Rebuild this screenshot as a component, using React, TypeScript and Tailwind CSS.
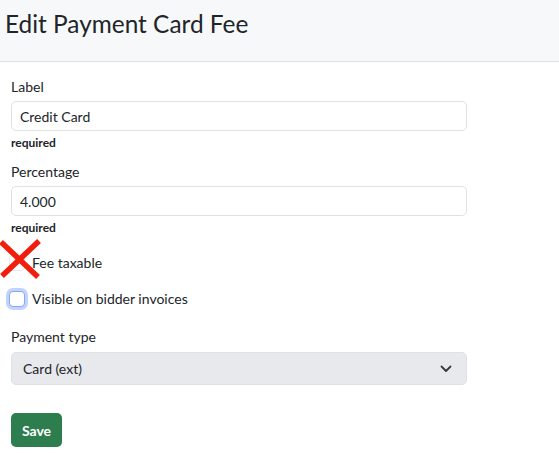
import React from "react";

export default function App() {
  return (
    <div className="w-[559px] h-[453px] bg-white text-[#212529] overflow-hidden" style={{ fontFamily: "Lato, 'Noto Sans', sans-serif" }}>
      <div className="h-[62px] bg-[#f7f8fa] border-b border-[#dee2e6] px-[5px] pt-[9px]">
        <h1 className="text-[24.4px] leading-[30px] font-normal">Edit Payment Card Fee</h1>
      </div>
      <div className="pl-[11px] pr-[92px] pt-[14px]">
        <div className="text-[14px] leading-[21px] mb-[4px]">Label</div>
        <div className="h-[30px] border border-[#dee2e6] rounded-[5px] px-[8px] flex items-center text-[14px]">Credit Card</div>
        <div className="text-[12px] font-bold leading-[18px] mt-[3px]">required</div>
        <div className="text-[14px] leading-[21px] mt-[9px] mb-[4px]">Percentage</div>
        <div className="h-[30px] border border-[#dee2e6] rounded-[5px] px-[8px] flex items-center text-[14px]">4.000</div>
        <div className="text-[12px] font-bold leading-[18px] mt-[3px]">required</div>
        <div className="relative flex items-center h-[21px] mt-[15px] text-[14px]">
          <div className="w-[16px] h-[16px] border border-[#e6e8eb] rounded-[4px] ml-[-2px] mr-[7px] bg-white" />
          <span>Fee taxable</span>
          <svg className="absolute left-[-12px] top-[-15px]" width="44" height="44" viewBox="0 0 44 44">
            <path d="M2 5 L39 40 M40 4 L3 39" stroke="#f01e0a" strokeWidth="5.5" strokeLinecap="butt" />
          </svg>
        </div>
        <div className="flex items-center h-[21px] mt-[15px] text-[14px]">
          <div className="w-[16px] h-[16px] border border-[#86a8f0] rounded-[4px] ml-[-2px] mr-[7px] bg-white shadow-[0_0_0_3px_rgba(120,160,250,0.45)]" />
          <span>Visible on bidder invoices</span>
        </div>
        <div className="text-[14px] leading-[21px] mt-[17px] mb-[5px]">Payment type</div>
        <div className="h-[33px] bg-[#e7e9ec] border border-[#dee2e6] rounded-[5px] pl-[11px] pr-[14px] flex items-center justify-between text-[14px]">
          <span>Card (ext)</span>
          <svg width="12" height="8" viewBox="0 0 12 8">
            <path d="M1.5 1.5 L6 6 L10.5 1.5" stroke="#343a40" strokeWidth="1.8" fill="none" strokeLinecap="round" strokeLinejoin="round" />
          </svg>
        </div>
        <button className="mt-[28px] h-[34px] w-[51px] bg-[#2e7d4f] text-white font-bold text-[14px] rounded-[5px]">Save</button>
      </div>
    </div>
  );
}
